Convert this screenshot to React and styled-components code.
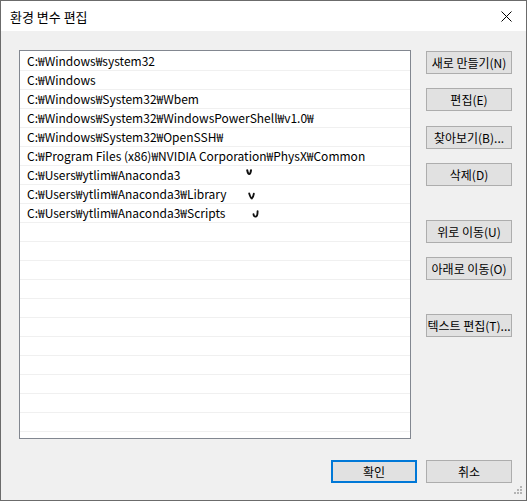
import React from 'react';
import styled, { createGlobalStyle } from 'styled-components';

const GlobalStyle = createGlobalStyle`
    html, body {
        margin: 0;
        padding: 0;
        background: #ffffff;
    }
    * {
        box-sizing: border-box;
    }
`

const paths = [
    'C:₩Windows₩system32',
    'C:₩Windows',
    'C:₩Windows₩System32₩Wbem',
    'C:₩Windows₩System32₩WindowsPowerShell₩v1.0₩',
    'C:₩Windows₩System32₩OpenSSH₩',
    'C:₩Program Files (x86)₩NVIDIA Corporation₩PhysX₩Common',
    'C:₩Users₩ytlim₩Anaconda3',
    'C:₩Users₩ytlim₩Anaconda3₩Library',
    'C:₩Users₩ytlim₩Anaconda3₩Scripts',
];

// stray pen marks drawn over the list
const marks = {
    6: { left: 226, top: 3, d: 'M1.2 1.2 Q2 5 3.2 5 Q4.6 5 5 1.2', w: 7, h: 7, sw: 2 },
    7: { left: 228, top: 7, d: 'M1.2 1.5 Q2.8 6.5 3.8 6.5 Q5.2 5.5 5.8 1.8', w: 8, h: 8, sw: 1.9 },
    8: { left: 232, top: 6, d: 'M1.5 4.2 Q1.8 7 3.8 6.6 Q5.6 6.2 5.6 1.2', w: 8, h: 8, sw: 1.9 },
};

const sideButtons = [
    { label: '새로 만들기(N)', gap: 0 },
    { label: '편집(E)', gap: 14 },
    { label: '찾아보기(B)...', gap: 15 },
    { label: '삭제(D)', gap: 14 },
    { label: '위로 이동(U)', gap: 34 },
    { label: '아래로 이동(O)', gap: 14 },
    { label: '텍스트 편집(T)...', gap: 34 },
];

const App = () => {
    const rows = [];
    for (let i = 0; i < 20; i++) {
        rows.push(paths[i] || '');
    }

    return (
        <>
            <GlobalStyle />
            <Window>
                <TitleBar>
                    <Title>환경 변수 편집</Title>
                    <CloseIcon width="11" height="11" viewBox="0 0 11 11">
                        <path d="M0.5 0.5 L10.5 10.5 M10.5 0.5 L0.5 10.5" stroke="#000" strokeWidth="1" fill="none" />
                    </CloseIcon>
                </TitleBar>
                <Body>
                    <Main>
                        <PathList>
                            {rows.map((text, i) => (
                                <PathRow key={i}>
                                    {text}
                                    {marks[i] && (
                                        <Mark
                                            $left={marks[i].left}
                                            $top={marks[i].top}
                                            width={marks[i].w}
                                            height={marks[i].h}
                                            viewBox={`0 0 ${marks[i].w} ${marks[i].h}`}
                                        >
                                            <path d={marks[i].d} stroke="#111" strokeWidth={marks[i].sw} fill="none" strokeLinecap="round" />
                                        </Mark>
                                    )}
                                </PathRow>
                            ))}
                        </PathList>
                        <SideColumn>
                            {sideButtons.map((b) => (
                                <Button key={b.label} $gap={b.gap}>{b.label}</Button>
                            ))}
                        </SideColumn>
                    </Main>
                    <Footer>
                        <Button $primary>확인</Button>
                        <Button>취소</Button>
                    </Footer>
                </Body>
                <Grip width="12" height="12" viewBox="0 0 12 12">
                    <rect x="8" y="0" width="2" height="2" fill="#b4b4b4" />
                    <rect x="5" y="3" width="2" height="2" fill="#b4b4b4" />
                    <rect x="8" y="3" width="2" height="2" fill="#b4b4b4" />
                    <rect x="2" y="6" width="2" height="2" fill="#b4b4b4" />
                    <rect x="5" y="6" width="2" height="2" fill="#b4b4b4" />
                    <rect x="8" y="6" width="2" height="2" fill="#b4b4b4" />
                </Grip>
            </Window>
        </>
    );
}

export default App;

const Window = styled.div`
    position: relative;
    width: 527px;
    height: 501px;
    border: 1px solid #6b6b6b;
    background: #f0f0f0;
    display: flex;
    flex-direction: column;
    font-family: "Noto Sans CJK KR", "Noto Sans", sans-serif;
    font-size: 12px;
    color: #000;
    overflow: hidden;
`

const TitleBar = styled.div`
    height: 30px;
    background: #ffffff;
    display: flex;
    align-items: center;
    justify-content: space-between;
    padding: 0 14px 0 9px;
`

const Title = styled.div`
    font-size: 13px;
    line-height: 1;
`

const CloseIcon = styled.svg`
    display: block;
`

const Body = styled.div`
    flex: 1;
    display: flex;
    flex-direction: column;
    padding: 19px 14px 0 18px;
`

const Main = styled.div`
    display: flex;
    gap: 15px;
`

const PathList = styled.div`
    width: 392px;
    height: 389px;
    border: 1px solid #828790;
    background: #ffffff;
    padding-top: 1px;
    overflow: hidden;
`

const PathRow = styled.div`
    position: relative;
    height: 19px;
    border-bottom: 1px solid #f0f0f0;
    padding-left: 7px;
    line-height: 18px;
    white-space: nowrap;
`

const Mark = styled.svg`
    position: absolute;
    left: ${(p) => p.$left}px;
    top: ${(p) => p.$top}px;
`

const SideColumn = styled.div`
    display: flex;
    flex-direction: column;
    padding-top: 1px;
`

const Button = styled.button`
    width: 86px;
    height: 23px;
    margin-top: ${(p) => p.$gap || 0}px;
    padding: 0;
    background: #e1e1e1;
    border: ${(p) => (p.$primary ? '2px solid #0078d7' : '1px solid #adadad')};
    font-family: inherit;
    font-size: 12px;
    color: #000;
    white-space: nowrap;
    line-height: 1;
`

const Footer = styled.div`
    display: flex;
    justify-content: flex-end;
    gap: 9px;
    margin-top: 21px;
`

const Grip = styled.svg`
    position: absolute;
    right: 2px;
    bottom: 2px;
`
